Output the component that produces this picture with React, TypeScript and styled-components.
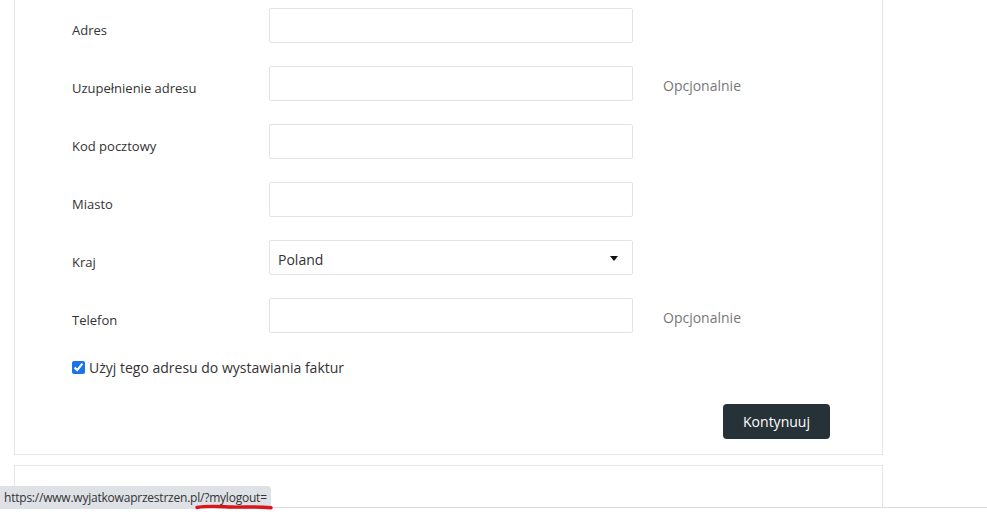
import styled, { createGlobalStyle } from "styled-components"

const GlobalStyle = createGlobalStyle`
  html, body {
    margin: 0;
    padding: 0;
    background: #fff;
    overflow: hidden;
  }
  body {
    font-family: "Open Sans", "Liberation Sans", sans-serif;
    color: #333;
  }
`

type Field = {
  label: string
  value?: string
  select?: boolean
  optional?: boolean
}

const fields: Field[] = [
  { label: "Adres" },
  { label: "Uzupełnienie adresu", optional: true },
  { label: "Kod pocztowy" },
  { label: "Miasto" },
  { label: "Kraj", value: "Poland", select: true },
  { label: "Telefon", optional: true },
]

export default function App() {
  return (
    <>
      <GlobalStyle />
      <Page>
        <Card>
          <Form>
            {fields.map(FormRow)}
          </Form>
          <CheckRow>
            <Checkbox type="checkbox" defaultChecked />
            <span>Użyj tego adresu do wystawiania faktur</span>
          </CheckRow>
          <Actions>
            <Button>Kontynuuj</Button>
          </Actions>
        </Card>
        <NextCard />
      </Page>
      <StatusBubble>
        https://www.wyjatkowaprzestrzen.pl/?mylogout=
        <Scribble width="80" height="8" viewBox="0 0 80 8">
          <path
            d="M2 5.5 C 12 3.5, 24 4.5, 36 5 S 60 4, 76 5.8"
            stroke="#d9161c"
            strokeWidth="3.4"
            strokeLinecap="round"
            fill="none"
          />
        </Scribble>
      </StatusBubble>
    </>
  )
}

const FormRow = ({ label, value, select, optional }: Field) => {
  return (
    <Row key={label}>
      <Label>{label}</Label>
      {select ? (
        <SelectBox>
          <span>{value}</span>
          <Caret />
        </SelectBox>
      ) : (
        <Input type="text" />
      )}
      {optional && <Hint>Opcjonalnie</Hint>}
    </Row>
  )
}

const Page = styled.div`
  height: 508px;
  border-bottom: 1px solid #dcdcdc;
  padding-left: 14px;
  overflow: hidden;
  box-sizing: border-box;
  width: 987px;
`

const Card = styled.div`
  width: 869px;
  box-sizing: border-box;
  border: 1px solid #e6e6e6;
  border-top: none;
  padding: 8px 0 15px 57px;
`

const NextCard = styled.div`
  width: 869px;
  height: 60px;
  box-sizing: border-box;
  margin-top: 10px;
  border: 1px solid #e6e6e6;
`

const Form = styled.div`
  display: flex;
  flex-direction: column;
  gap: 23px;
`

const Row = styled.div`
  display: grid;
  grid-template-columns: 167px 364px auto;
  column-gap: 30px;
  align-items: center;
`

const Label = styled.label`
  align-self: start;
  padding-top: 13px;
  font-size: 13px;
  line-height: 18px;
  color: #333;
`

const Input = styled.input`
  height: 35px;
  box-sizing: border-box;
  border: 1px solid #e3e3e3;
  border-radius: 2px;
  outline: none;
  padding: 0 8px;
  font: inherit;
`

const SelectBox = styled.div`
  height: 35px;
  box-sizing: border-box;
  border: 1px solid #e3e3e3;
  border-radius: 2px;
  display: flex;
  align-items: center;
  justify-content: space-between;
  padding: 4px 14px 0 8px;
  font-size: 14px;
  color: #333;
`

const Caret = styled.span`
  width: 0;
  height: 0;
  border-left: 4px solid transparent;
  border-right: 4px solid transparent;
  border-top: 5px solid #111;
  margin-top: -2px;
`

const Hint = styled.span`
  font-size: 14px;
  color: #777;
  padding-top: 3px;
`

const CheckRow = styled.label`
  display: flex;
  align-items: center;
  gap: 4px;
  margin-top: 25px;
  font-size: 14px;
  color: #333;
`

const Checkbox = styled.input`
  width: 13px;
  height: 13px;
  margin: 0;
  accent-color: #1a73e8;
`

const Actions = styled.div`
  display: flex;
  justify-content: flex-end;
  padding-right: 52px;
  margin-top: 27px;
`

const Button = styled.button`
  height: 35px;
  width: 107px;
  border: none;
  border-radius: 4px;
  background: #263238;
  color: #fff;
  font-family: "Open Sans", "Liberation Sans", sans-serif;
  font-size: 14px;
  font-weight: 500;
`

const StatusBubble = styled.div`
  position: absolute;
  left: 0;
  top: 486px;
  height: 23px;
  box-sizing: border-box;
  padding: 0 4px 0 4px;
  display: flex;
  align-items: center;
  background: #dee1e6;
  border-top-right-radius: 4px;
  font-size: 12px;
  letter-spacing: -0.22px;
  color: #333;
  white-space: nowrap;
`

const Scribble = styled.svg`
  position: absolute;
  left: 195px;
  top: 16px;
`
